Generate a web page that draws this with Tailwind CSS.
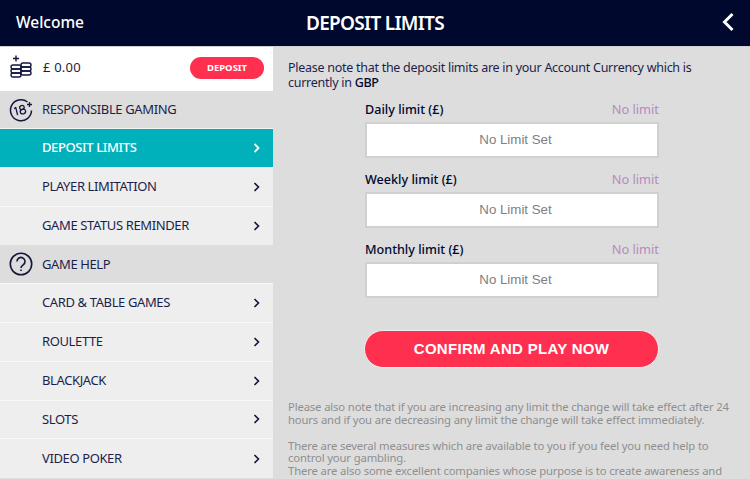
<!DOCTYPE html>
<html><head><meta charset="utf-8"><script src="https://cdn.jsdelivr.net/npm/@tailwindcss/browser@4"></script></head>
<body class="m-0">
<div class="w-[750px] h-[479px] overflow-hidden flex flex-col bg-[#dddddd] font-['Noto_Sans',sans-serif] text-[#1c1f4a]">
  <header class="h-[47px] shrink-0 bg-[#00082e] border-b border-[#cfcfd6] flex items-center text-white relative">
    <div class="w-[273px] pl-4 text-[15.500px] font-medium">Welcome</div>
    <div class="pl-[33px] text-[19px] font-semibold tracking-[-0.7px]">DEPOSIT LIMITS</div>
    <svg class="absolute right-[16px] top-[12px]" width="12" height="20" viewBox="0 0 12 20" fill="none" stroke="#fff" stroke-width="3"><path d="M10.500 2 L2.500 10 L10.500 18"/></svg>
  </header>
  <div class="flex flex-1 min-h-0">
    <aside class="w-[273px] shrink-0 flex flex-col text-[13px] tracking-[-0.38px]">
      <div class="h-[44px] shrink-0 bg-white flex items-center pl-[10px] pr-[9px] relative">
        <svg width="22" height="23" viewBox="0 0 22 23" fill="none" stroke="#14163f" stroke-width="1.400" class="mr-[11px] -mt-[5px]"><path d="M6 0.500v6M3 3.500h6"/><rect x="1" y="10" width="10" height="4" rx="2"/><rect x="1" y="14" width="10" height="4" rx="2"/><rect x="1" y="18" width="10" height="4" rx="2"/><rect x="11" y="8" width="10" height="4" rx="2"/><rect x="11" y="12" width="10" height="4" rx="2"/><rect x="11" y="16" width="10" height="4" rx="2"/></svg>
        <span class="text-[13px] tracking-[0.2px] -mt-[3px]">£ 0.00</span>
        <button class="ml-auto w-[74px] h-[22px] -mt-[2px] rounded-full bg-[#ff304f] text-white text-[9.500px] font-bold tracking-normal font-['Noto_Sans',sans-serif]">DEPOSIT</button>
      </div>
      <div class="h-[38px] shrink-0 bg-[#dddddd] flex items-center border-b border-[#f2f2f2]">
        <svg width="24" height="24" viewBox="0 0 24 24" fill="none" stroke="#14163f" stroke-width="1.500" class="ml-[9px] mr-[9px]"><path d="M18.500 4A10.500 10.500 0 1 0 22.500 12.500"/><g transform="rotate(-14 12 12)" stroke-width="1.300"><path d="M7.500 8v8M7.500 8l-1.700 1.300"/><ellipse cx="13.500" cy="9.800" rx="2.300" ry="2"/><ellipse cx="13.500" cy="14" rx="2.700" ry="2.300"/></g><path d="M20.500 4v5M18 6.500h5" stroke-width="1.300"/></svg>
        <span>RESPONSIBLE GAMING</span>
      </div>
      <a class="h-[38.800px] shrink-0 bg-[#00b1bb] text-white flex items-center pl-[42px] pr-[12px] border-b border-[#f2f2f2] font-medium">DEPOSIT LIMITS<svg class="ml-auto" width="8" height="10" viewBox="0 0 8 10" fill="none" stroke="#fff" stroke-width="1.800"><path d="M1.500 1l4 4-4 4"/></svg></a>
      <a class="h-[38.800px] shrink-0 bg-[#eeeeee] flex items-center pl-[42px] pr-[12px] border-b border-[#f8f8f8]">PLAYER LIMITATION<svg class="ml-auto" width="8" height="10" viewBox="0 0 8 10" fill="none" stroke="#14163f" stroke-width="1.600"><path d="M1.500 1l4 4-4 4"/></svg></a>
      <a class="h-[38.800px] shrink-0 bg-[#eeeeee] flex items-center pl-[42px] pr-[12px]">GAME STATUS REMINDER<svg class="ml-auto" width="8" height="10" viewBox="0 0 8 10" fill="none" stroke="#14163f" stroke-width="1.600"><path d="M1.500 1l4 4-4 4"/></svg></a>
      <div class="h-[38.800px] shrink-0 bg-[#dddddd] flex items-center border-b border-[#f8f8f8]">
        <svg width="24" height="24" viewBox="0 0 24 24" fill="none" stroke="#14163f" stroke-width="1.600" class="ml-[9px] mr-[9px]"><circle cx="12" cy="12" r="10.700"/><path d="M8 9.500a4 4 0 1 1 6.200 3.300c-1.500 1-2.200 1.700-2.200 3.200"/><path d="M12 17.500v1.500"/></svg>
        <span>GAME HELP</span>
      </div>
      <a class="h-[38.800px] shrink-0 bg-[#eeeeee] flex items-center pl-[42px] pr-[12px] border-b border-[#f8f8f8]">CARD &amp; TABLE GAMES<svg class="ml-auto" width="8" height="10" viewBox="0 0 8 10" fill="none" stroke="#14163f" stroke-width="1.600"><path d="M1.500 1l4 4-4 4"/></svg></a>
      <a class="h-[38.800px] shrink-0 bg-[#eeeeee] flex items-center pl-[42px] pr-[12px] border-b border-[#f8f8f8]">ROULETTE<svg class="ml-auto" width="8" height="10" viewBox="0 0 8 10" fill="none" stroke="#14163f" stroke-width="1.600"><path d="M1.500 1l4 4-4 4"/></svg></a>
      <a class="h-[38.800px] shrink-0 bg-[#eeeeee] flex items-center pl-[42px] pr-[12px] border-b border-[#f8f8f8]">BLACKJACK<svg class="ml-auto" width="8" height="10" viewBox="0 0 8 10" fill="none" stroke="#14163f" stroke-width="1.600"><path d="M1.500 1l4 4-4 4"/></svg></a>
      <a class="h-[38.800px] shrink-0 bg-[#eeeeee] flex items-center pl-[42px] pr-[12px] border-b border-[#f8f8f8]">SLOTS<svg class="ml-auto" width="8" height="10" viewBox="0 0 8 10" fill="none" stroke="#14163f" stroke-width="1.600"><path d="M1.500 1l4 4-4 4"/></svg></a>
      <a class="h-[38.800px] shrink-0 bg-[#eeeeee] flex items-center pl-[42px] pr-[12px]">VIDEO POKER<svg class="ml-auto" width="8" height="10" viewBox="0 0 8 10" fill="none" stroke="#14163f" stroke-width="1.600"><path d="M1.500 1l4 4-4 4"/></svg></a>
    </aside>
    <main class="flex-1 min-w-0 pl-[15px] pr-[20px] pt-[13px] text-[12.500px] h-[432px] overflow-hidden">
      <p class="leading-[15px] m-0 w-[440px] tracking-[-0.27px]">Please note that the deposit limits are in your Account Currency which is currently in <span class="font-medium text-[#00082e]">GBP</span></p>
      <div class="w-[294px] ml-[77px] mt-[11px] flex flex-col gap-[13px]">
        <div>
          <div class="flex justify-between h-[18px] items-center"><span class="font-medium text-[#00082e] text-[12.600px]">Daily limit (£)</span><span class="text-[#b989c0] text-[12.800px]">No limit</span></div>
          <div class="h-[36px] mt-[3px] pl-[7px] bg-white border-2 border-[#d0d0d0] flex items-center justify-center font-['Liberation_Sans',sans-serif] text-[13.300px] text-[#808080]">No Limit Set</div>
        </div>
        <div>
          <div class="flex justify-between h-[18px] items-center"><span class="font-medium text-[#00082e] text-[12.600px]">Weekly limit (£)</span><span class="text-[#b989c0] text-[12.800px]">No limit</span></div>
          <div class="h-[36px] mt-[3px] pl-[7px] bg-white border-2 border-[#d0d0d0] flex items-center justify-center font-['Liberation_Sans',sans-serif] text-[13.300px] text-[#808080]">No Limit Set</div>
        </div>
        <div>
          <div class="flex justify-between h-[18px] items-center"><span class="font-medium text-[#00082e] text-[12.600px]">Monthly limit (£)</span><span class="text-[#b989c0] text-[12.800px]">No limit</span></div>
          <div class="h-[36px] mt-[3px] pl-[7px] bg-white border-2 border-[#d0d0d0] flex items-center justify-center font-['Liberation_Sans',sans-serif] text-[13.300px] text-[#808080]">No Limit Set</div>
        </div>
      </div>
      <button class="block w-[295px] h-[38px] ml-[76px] mt-[32px] rounded-full bg-[#ff304f] border border-[#eeeeee] text-white font-bold text-[15px] tracking-[0.3px] font-['Liberation_Sans',sans-serif]">CONFIRM AND PLAY NOW</button>
      <div class="mt-[33px] text-[11.300px] leading-[12.500px] text-[#8f8f8f] w-[450px] tracking-[-0.15px]">
        <p class="m-0">Please also note that if you are increasing any limit the change will take effect after 24 hours and if you are decreasing any limit the change will take effect immediately.</p>
        <p class="m-0 mt-[13.500px]">There are several measures which are available to you if you feel you need help to control your gambling.</p>
        <p class="m-0">There are also some excellent companies whose purpose is to create awareness and give help to gamblers finding it hard to control their gambling responsibly.</p>
      </div>
    </main>
  </div>
</div>
</body></html>
